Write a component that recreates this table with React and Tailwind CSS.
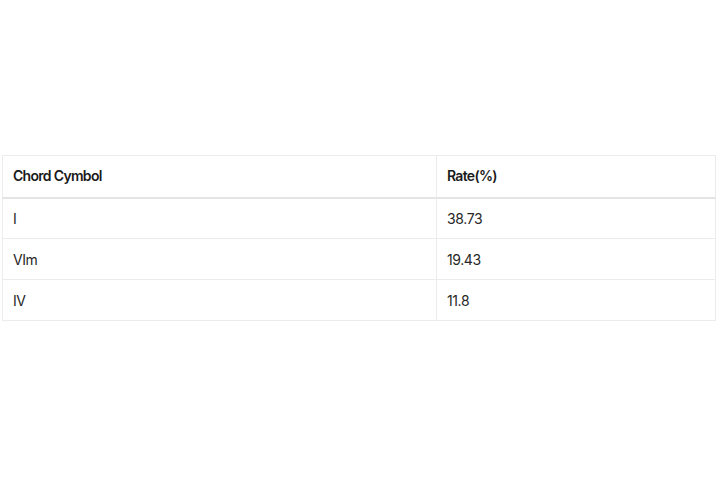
export default function App() {
  const rows = [
    ["I", "38.73"],
    ["VIm", "19.43"],
    ["IV", "11.8"],
  ];
  return (
    <div className="w-[720px] h-[480px] bg-white pt-[155px] pl-[2px]" style={{ fontFamily: "Inter, 'Liberation Sans', sans-serif" }}>
      <table className="w-[714px] border-collapse text-[14px] tracking-[-0.4px]">
        <thead>
          <tr className="h-[42px]">
            <th className="w-[434px] border border-[#ececec] border-b-2 border-b-[#e4e4e4] text-left font-semibold tracking-[-0.7px] text-[#1a1a1a] pl-[10px] pb-[2px]">Chord Cymbol</th>
            <th className="border border-[#ececec] border-b-2 border-b-[#e4e4e4] text-left font-semibold tracking-[-0.7px] text-[#1a1a1a] pl-[10px] pb-[2px]">Rate(%)</th>
          </tr>
        </thead>
        <tbody>
          {rows.map(([a, b]) => (
            <tr key={a} className="h-[41px]">
              <td className="border border-[#ececec] pl-[10px] text-[#262626]">{a}</td>
              <td className="border border-[#ececec] pl-[10px] text-[#262626]">{b}</td>
            </tr>
          ))}
        </tbody>
      </table>
    </div>
  );
}
